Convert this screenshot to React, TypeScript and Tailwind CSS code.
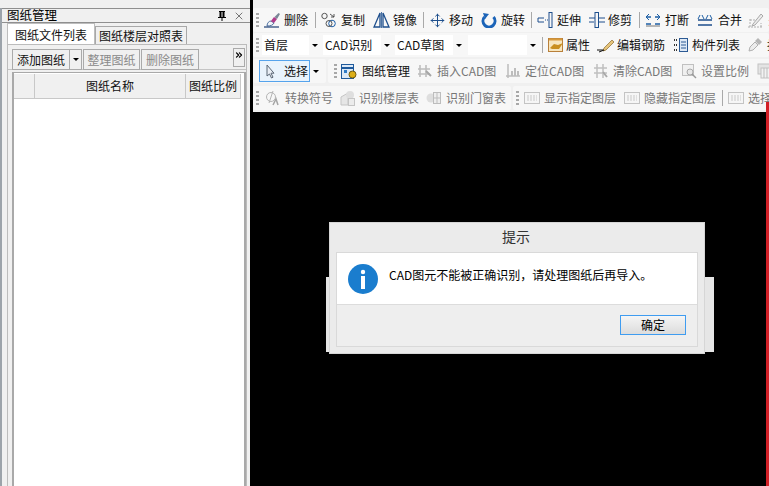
import type { ReactNode } from "react";
import { ChevronsRight, Move, X } from "lucide-react";

type ToolItem = { label: string; icon: ReactNode; width: string; gap?: string; off?: boolean };

function Grip() {
  return (
    <div className="flex flex-col gap-[2px] w-[3px] shrink-0">
      <i className="h-[2px] bg-[#a8a8a8]" />
      <i className="h-[2px] bg-[#a8a8a8]" />
      <i className="h-[2px] bg-[#a8a8a8]" />
      <i className="h-[2px] bg-[#a8a8a8]" />
    </div>
  );
}

function Sep() {
  return <div className="w-px h-[16px] bg-[#a9a9a9] shrink-0" />;
}

function Caret() {
  return <div className="w-0 h-0 border-x-[3px] border-x-transparent border-t-[3px] border-t-black" />;
}

function Glyph({ children, w = 16 }: { children: ReactNode; w?: number }) {
  return (
    <svg width={w} height="16" viewBox={`0 0 ${w} 16`} fill="none" className="shrink-0">
      {children}
    </svg>
  );
}

const icons = {
  erase: (
    <Glyph w={18}>
      <path d="M1 15h15" stroke="#1d3f73" strokeWidth="1.200" />
      <path d="M4 14c0-3 2-5 4-5l3 2c-1 2-3 3-7 3z" fill="#f2f4f7" stroke="#28518a" strokeWidth=".8" />
      <path d="M8 9l3-4 3 2-3 4z" fill="#b03a8a" />
      <path d="M11.500 5l4-4 1.500 1-3 5z" fill="#7a8796" />
    </Glyph>
  ),
  copy: (
    <Glyph>
      <circle cx="3.500" cy="4" r="2.700" stroke="#555" />
      <circle cx="11" cy="11.500" r="3.300" stroke="#1d5fa8" />
      <circle cx="8" cy="11.500" r="3" stroke="#555" />
      <path d="M9 2l4 3M13 2v3h-3" stroke="#444" strokeWidth=".9" />
    </Glyph>
  ),
  mirror: (
    <Glyph w={17}>
      <path d="M7 1L1 15h6zM10 1l6 14h-6z" stroke="#1e4f8d" strokeWidth="1.300" />
      <path d="M8.500 0v16" stroke="#1e4f8d" strokeWidth=".8" />
    </Glyph>
  ),
  rotate: (
    <Glyph>
      <path d="M3.500 5a6 6 0 1 0 9 0" stroke="#1c64b8" strokeWidth="3" />
      <path d="M2 1l6 1-4 5z" fill="#1c64b8" />
    </Glyph>
  ),
  extend: (
    <Glyph>
      <path d="M1 6h6M1 10h6M1 6v4" stroke="#1e4f8d" />
      <path d="M8 8h3" stroke="#1e4f8d" strokeDasharray="1 1" />
      <rect x="12" y="0.500" width="3" height="15" stroke="#1e4f8d" />
    </Glyph>
  ),
  trim: (
    <Glyph>
      <path d="M0 6h16M0 10h5M10 10h6" stroke="#1e4f8d" />
      <rect x="6" y="0.500" width="3.500" height="15" fill="#f7f7f7" stroke="#1e4f8d" />
    </Glyph>
  ),
  split: (
    <Glyph>
      <path d="M1 5h5M10 5h5M1 12h5M10 12h5" stroke="#1e5fa5" strokeWidth="1.500" />
      <path d="M4 2L1 5l3 3M12 2l3 3-3 3" stroke="#1e5fa5" />
      <path d="M1 14h14" stroke="#777" />
    </Glyph>
  ),
  merge: (
    <Glyph>
      <path d="M1 8h14M1 13h14" stroke="#1e4f8d" strokeWidth="1.500" />
      <path d="M3 3l-2 4M5 3l2 4M11 3l-2 4M13 3l2 4" stroke="#1e5fa5" />
    </Glyph>
  ),
  prop: (
    <Glyph w={18}>
      <rect x="1.500" y="1.500" width="14" height="13" fill="#f7e6bf" stroke="#b9803a" />
      <path d="M2 2.500h13" stroke="#d89a3c" strokeWidth="2" />
      <path d="M3 11l4-4 4 1 5-2-4 6H5z" fill="#c98f1f" />
    </Glyph>
  ),
  rebar: (
    <Glyph w={19}>
      <path d="M0 13h8" stroke="#111" />
      <path d="M7 11l8-8 2 2-8 8-3 1z" fill="#e6c47a" stroke="#8a6a2f" strokeWidth=".7" />
      <path d="M2 15l5-2" stroke="#111" />
    </Glyph>
  ),
  list: (
    <Glyph>
      <path d="M1 3h3M1 8h3M1 13h3" stroke="#333" strokeWidth="2" strokeDasharray="1 1" />
      <rect x="6.500" y="1.500" width="8" height="13" fill="#dfe9f5" stroke="#2c5a94" />
      <path d="M8 5h5M8 8h5M8 11h5" stroke="#2c5a94" />
    </Glyph>
  ),
  dropper: (
    <Glyph>
      <path d="M2 14l1-4 5-5 3 3-5 5z" fill="#ececec" stroke="#b0b0b0" />
      <path d="M8 4l3-3 4 4-3 3z" fill="#b5b5b5" />
    </Glyph>
  ),
  gauge: (
    <Glyph w={18}>
      <path d="M1 15h15M3 15V6M14 15v-4M3 8h8" stroke="#b0b0b0" strokeDasharray="2 1" />
      <path d="M6 12l8-10 2 2-8 9-3 1z" fill="#ececec" stroke="#a8a8a8" />
    </Glyph>
  ),
  cursor: (
    <Glyph>
      <path d="M5 2v11l2.500-2 2 4 1.500-.8-2-4h3z" fill="#e9eef5" stroke="#5a6675" />
    </Glyph>
  ),
  sheet: (
    <Glyph w={18}>
      <rect x="1.500" y="1.500" width="12" height="14" fill="#dce9f7" stroke="#1f5a9c" />
      <path d="M1.500 5h12" stroke="#1f5a9c" strokeWidth="2" />
      <rect x="4" y="7" width="3" height="3" fill="#2e7bc6" />
      <circle cx="12.500" cy="11.500" r="3.500" fill="#dcae17" stroke="#6f5a10" />
    </Glyph>
  ),
  insert: (
    <Glyph>
      <path d="M3 2v12M9 2v12M1 6h12M1 11h12" stroke="#bdbdbd" strokeWidth="1.600" />
      <path d="M9 8l5 5" stroke="#a6a6a6" strokeWidth="2" />
    </Glyph>
  ),
  locate: (
    <Glyph>
      <path d="M3 1v14M1 13h14" stroke="#bdbdbd" strokeWidth="1.500" />
      <path d="M7 13V8M10 13V5M13 13V8" stroke="#bdbdbd" strokeWidth="2" />
    </Glyph>
  ),
  clear: (
    <Glyph>
      <path d="M4 1v14M10 1v14M1 5h13M1 10h13" stroke="#c0c0c0" strokeWidth="1.500" />
      <path d="M10 9l4 5" stroke="#a8a8a8" strokeWidth="2" />
    </Glyph>
  ),
  ratio: (
    <Glyph>
      <rect x="1.500" y="1.500" width="11" height="11" fill="#f0f0f0" stroke="#c0c0c0" />
      <circle cx="9" cy="9" r="3" fill="#e8e8e8" stroke="#a8a8a8" />
      <path d="M11 11l4 4" stroke="#9a9a9a" strokeWidth="1.500" />
    </Glyph>
  ),
  stack: (
    <Glyph w={18}>
      <rect x="1" y="1" width="12" height="10" fill="#e4e4e4" stroke="#c2c2c2" />
      <rect x="4" y="5" width="13" height="10" fill="#f2f2f2" stroke="#c2c2c2" />
      <path d="M7 5v10M10 5v10M13 5v10" stroke="#bdbdbd" />
    </Glyph>
  ),
  symbol: (
    <Glyph>
      <circle cx="7" cy="7" r="4.500" stroke="#b5b5b5" />
      <path d="M9 1L5 13" stroke="#b5b5b5" />
      <path d="M9 15l3-6 2 6" stroke="#a5a5a5" strokeWidth="1.500" />
    </Glyph>
  ),
  floors: (
    <Glyph w={18}>
      <path d="M2 15V7l7-4v12z" fill="#e6e6e6" stroke="#c5c5c5" />
      <circle cx="11" cy="5" r="4" fill="#dedede" />
      <rect x="9.500" y="8.500" width="6" height="7" fill="#ececec" stroke="#c5c5c5" />
    </Glyph>
  ),
  door: (
    <Glyph>
      <circle cx="5" cy="8" r="4.500" fill="#dedede" />
      <rect x="7.500" y="2.500" width="7" height="11" fill="#eeeeee" stroke="#bdbdbd" />
      <path d="M11 3v10M8 8h6" stroke="#bdbdbd" />
    </Glyph>
  ),
};

function CadTag() {
  return (
    <svg width="16" height="14" viewBox="0 0 16 14" className="shrink-0">
      <rect x=".5" y="1.500" width="15" height="11" fill="#f6f6f6" stroke="#c4c4c4" />
      <path d="M3 5h10M3 7h10M3 9h10" stroke="#c9c9c9" strokeDasharray="2 1" />
    </svg>
  );
}

function Tool({ label, icon, width, gap = "gap-[4px]", off }: ToolItem) {
  return (
    <div className={`flex items-center shrink-0 ${width} ${gap}`}>
      {icon}
      {label && <span className={`whitespace-nowrap ${off ? "text-[#777]" : "text-[#111]"}`}>{label}</span>}
    </div>
  );
}

function Bar({ className, children }: { className: string; children: ReactNode }) {
  return <div className={`flex items-center rounded-[2px] bg-[#f7f7f7] h-[24px] ${className}`}>{children}</div>;
}

function Combo({ label, width }: { label: string; width: string }) {
  return (
    <div className="flex items-center h-[20px] shrink-0">
      <div className={`h-full bg-white flex items-center pl-[2px] ${width}`}>{label}</div>
      <div className="w-[12px] h-full flex items-center justify-center">
        <Caret />
      </div>
    </div>
  );
}

function PinGlyph() {
  return (
    <svg width="8" height="10" viewBox="0 0 8 10" className="mr-[7px] shrink-0">
      <path d="M1 0.500h6M2 1h1v5H2zM5 1h1v5H5zM0 6.500h8M4 7v3" stroke="#000" fill="#000" />
    </svg>
  );
}

function LeftPanel() {
  return (
    <aside className="w-[250px] shrink-0 h-full flex bg-[#f0f0f0]">
      <div className="w-[2px] bg-[#9ca3aa] shrink-0 mt-[8px]" />
      <div className="flex-1 flex flex-col min-w-0">
        <div className="mt-[8px] h-[15px] border-y border-[#8f8f8f] flex items-center pl-[5px] pr-[3px] bg-[#f0f0f0] shrink-0">
          <span className="text-[12.500px] text-black flex-1 mb-[1px]">图纸管理</span>
          <PinGlyph />
          <X size={12} className="text-[#222] mr-[2px]" strokeWidth={1.200} />
        </div>
        <div className="flex items-end pl-[5px] h-[21px] shrink-0">
          <div className="w-[88px] h-[21px] bg-white border border-b-0 border-[#bdbdbd] flex items-center justify-center pt-[2px]">
            图纸文件列表
          </div>
          <div className="w-[92px] h-[18px] bg-[#f0f0f0] border border-b-0 border-[#a8a8a8] flex items-center justify-center">
            图纸楼层对照表
          </div>
        </div>
        <div className="flex-1 ml-[5px] mr-[3px] border-l border-r border-t border-[#bcbcbc] bg-[#f0f0f0] flex flex-col min-h-0">
          <div className="h-[25px] flex items-start pt-[4px] pl-[4px] pr-px shrink-0 border-b border-[#c4c4c4]">
            <div className="w-[58px] h-[21px] border border-[#aaa] flex items-center justify-center">添加图纸</div>
            <div className="w-[12px] h-[21px] border border-l-0 border-[#aaa] flex items-center justify-center">
              <Caret />
            </div>
            <div className="w-[57px] h-[21px] border border-[#aaa] ml-px flex items-center justify-center text-[#8a8a8a]">
              整理图纸
            </div>
            <div className="w-[58px] h-[21px] border border-[#aaa] ml-px flex items-center justify-center text-[#8a8a8a]">
              删除图纸
            </div>
            <div className="ml-auto w-[12px] h-[19px] mt-[-1px] border border-[#aaa] flex justify-center pt-[1px]">
              <ChevronsRight size={10} strokeWidth={3} className="text-black" />
            </div>
          </div>
          <div className="flex-1 mt-[2px] ml-[4px] border-x-2 border-t border-[#a9a9a9] bg-white min-h-0">
            <div className="flex h-[25px] mt-px bg-[#f0f0f0] border-b border-[#c8c8c8] mr-[3px]">
              <div className="w-[21px] border-r border-[#c8c8c8]" />
              <div className="w-[151px] border-r border-[#c8c8c8] flex items-center justify-center">图纸名称</div>
              <div className="flex-1 flex items-center justify-center whitespace-nowrap border-r border-[#c8c8c8]">
                图纸比例
              </div>
            </div>
          </div>
        </div>
      </div>
    </aside>
  );
}

function Dialog() {
  return (
    <>
      <div className="absolute left-[326px] top-[277px] w-[388px] h-[75px] bg-[#e6e6e6]" />
      <div className="absolute left-[329px] top-[222px] w-[376px] h-[132px] bg-[#ebebeb] border border-[#d6d6d6] flex flex-col px-[6px] pb-[6px]">
        <div className="h-[29px] flex items-center justify-center text-[14px] text-[#333] shrink-0 pb-[3px] pr-[2px]">
          提示
        </div>
        <div className="flex-1 border border-[#d9d9d9] flex flex-col">
          <div className="h-[52px] bg-white border-b border-[#dcdcdc] flex items-center pl-[11px] gap-[11px] shrink-0">
            <svg width="30" height="30" viewBox="0 0 30 30" className="shrink-0">
              <circle cx="15" cy="15" r="15" fill="#1a7dce" />
              <circle cx="15" cy="8" r="2.200" fill="#fff" />
              <rect x="13" y="12" width="4" height="13" fill="#fff" />
            </svg>
            <span className="text-black whitespace-nowrap mb-[7px]">CAD图元不能被正确识别，请处理图纸后再导入。</span>
          </div>
          <div className="flex-1 bg-[#eeeeee] flex justify-end items-start pt-[10px] pr-[11px]">
            <div className="w-[66px] h-[20px] border border-[#3f9cf0] bg-gradient-to-b from-[#f5f5f5] to-[#dcdcdc] flex items-center justify-center text-black">
              确定
            </div>
          </div>
        </div>
      </div>
    </>
  );
}

function Toolbars() {
  return (
    <div className="h-[112px] bg-[#f0f0f0] flex flex-col pt-[8px] overflow-hidden shrink-0">
      <Bar className="pl-[3px]">
        <Grip />
        <div className="flex items-center pl-[4px] w-[56px] shrink-0">
          <Tool label="删除" icon={icons.erase} width="w-[50px]" gap="gap-[3px]" />
        </div>
        <Sep />
        <div className="w-[5px] shrink-0" />
        <Tool label="复制" icon={icons.copy} width="w-[52px]" />
        <Tool label="镜像" icon={icons.mirror} width="w-[50px]" gap="gap-[3px]" />
        <Sep />
        <div className="w-[6px] shrink-0" />
        <Tool label="移动" icon={<Move size={15} color="#1e4f8d" strokeWidth={1.600} className="shrink-0" />} width="w-[51px]" />
        <Tool label="旋转" icon={icons.rotate} width="w-[50px]" gap="gap-[4px]" />
        <Sep />
        <div className="w-[5px] shrink-0" />
        <Tool label="延伸" icon={icons.extend} width="w-[52px]" />
        <Tool label="修剪" icon={icons.trim} width="w-[50px]" gap="gap-[3px]" />
        <Sep />
        <div className="w-[5px] shrink-0" />
        <Tool label="打断" icon={icons.split} width="w-[52px]" />
        <Tool label="合并" icon={icons.merge} width="w-[50px]" gap="gap-[5px]" />
        <Tool label="关" icon={icons.gauge} width="w-[30px]" gap="gap-[3px]" off />
      </Bar>
      <Bar className="mt-[1px] pl-[3px]">
        <Grip />
        <div className="w-[3px] shrink-0" />
        <Combo label="首层" width="w-[47px]" />
        <div className="w-[2px] shrink-0" />
        <Combo label="CAD识别" width="w-[58px]" />
        <div className="w-[2px] shrink-0" />
        <Combo label="CAD草图" width="w-[58px]" />
        <div className="w-[3px] shrink-0" />
        <Combo label="" width="w-[59px]" />
        <div className="w-[3px] shrink-0" />
        <Sep />
        <div className="w-[4px] shrink-0" />
        <Tool label="属性" icon={icons.prop} width="w-[50px]" gap="gap-[1px]" />
        <Tool label="编辑钢筋" icon={icons.rebar} width="w-[76px]" gap="gap-[1px]" />
        <Tool label="构件列表" icon={icons.list} width="w-[74px]" gap="gap-[3px]" />
        <Tool label="抄" icon={icons.dropper} width="w-[30px]" gap="gap-[4px]" />
      </Bar>
      <div className="flex gap-[2px] mt-[2px]">
        <Bar className="w-[73px] pl-[3px] shrink-0">
          <div className="w-[3px] shrink-0" />
          <div className="w-[51px] h-[22px] border border-[#55a3ec] bg-[#e9f3fc] flex items-center gap-[6px] pl-[2px] shrink-0">
            {icons.cursor}
            <span>选择</span>
          </div>
          <div className="ml-[3px]">
            <Caret />
          </div>
        </Bar>
        <Bar className="flex-1 pl-[6px]">
          <Grip />
          <div className="w-[3px] shrink-0" />
          <Tool label="图纸管理" icon={icons.sheet} width="w-[77px]" gap="gap-[4px]" />
          <Tool label="插入CAD图" icon={icons.insert} width="w-[88px]" off />
          <Tool label="定位CAD图" icon={icons.locate} width="w-[88px]" gap="gap-[4px]" off />
          <Tool label="清除CAD图" icon={icons.clear} width="w-[88px]" gap="gap-[4px]" off />
          <Tool label="设置比例" icon={icons.ratio} width="w-[76px]" off />
          <Tool label="" icon={icons.stack} width="w-[18px]" off />
        </Bar>
      </div>
      <div className="flex gap-[2px] mt-[3px]">
        <Bar className="w-[258px] pl-[3px] shrink-0">
          <Grip />
          <div className="w-[5px] shrink-0" />
          <Tool label="转换符号" icon={icons.symbol} width="w-[75px]" gap="gap-[5px]" off />
          <Tool label="识别楼层表" icon={icons.floors} width="w-[87px]" gap="gap-[2px]" off />
          <Tool label="识别门窗表" icon={icons.door} width="w-[86px]" gap="gap-[4px]" off />
        </Bar>
        <Bar className="flex-1 pl-[3px]">
          <Grip />
          <div className="w-[5px] shrink-0" />
          <Tool label="显示指定图层" icon={<CadTag />} width="w-[100px]" off />
          <Tool label="隐藏指定图层" icon={<CadTag />} width="w-[98px]" gap="gap-[4px]" off />
          <Sep />
          <div className="w-[5px] shrink-0" />
          <Tool label="选择" icon={<CadTag />} width="w-[48px]" gap="gap-[4px]" off />
        </Bar>
      </div>
    </div>
  );
}

export default function App() {
  return (
    <div className="relative w-[769px] h-[486px] flex overflow-hidden bg-black text-[12px] leading-none text-[#111] font-['Noto_Sans_CJK_SC','Liberation_Sans',sans-serif]">
      <LeftPanel />
      <main className="flex-1 min-w-0 pl-[3px] flex flex-col">
        <Toolbars />
      </main>
      <div className="absolute left-[766px] top-[102px] bottom-0 w-[3px] bg-[#d32027]" />
      <Dialog />
    </div>
  );
}
